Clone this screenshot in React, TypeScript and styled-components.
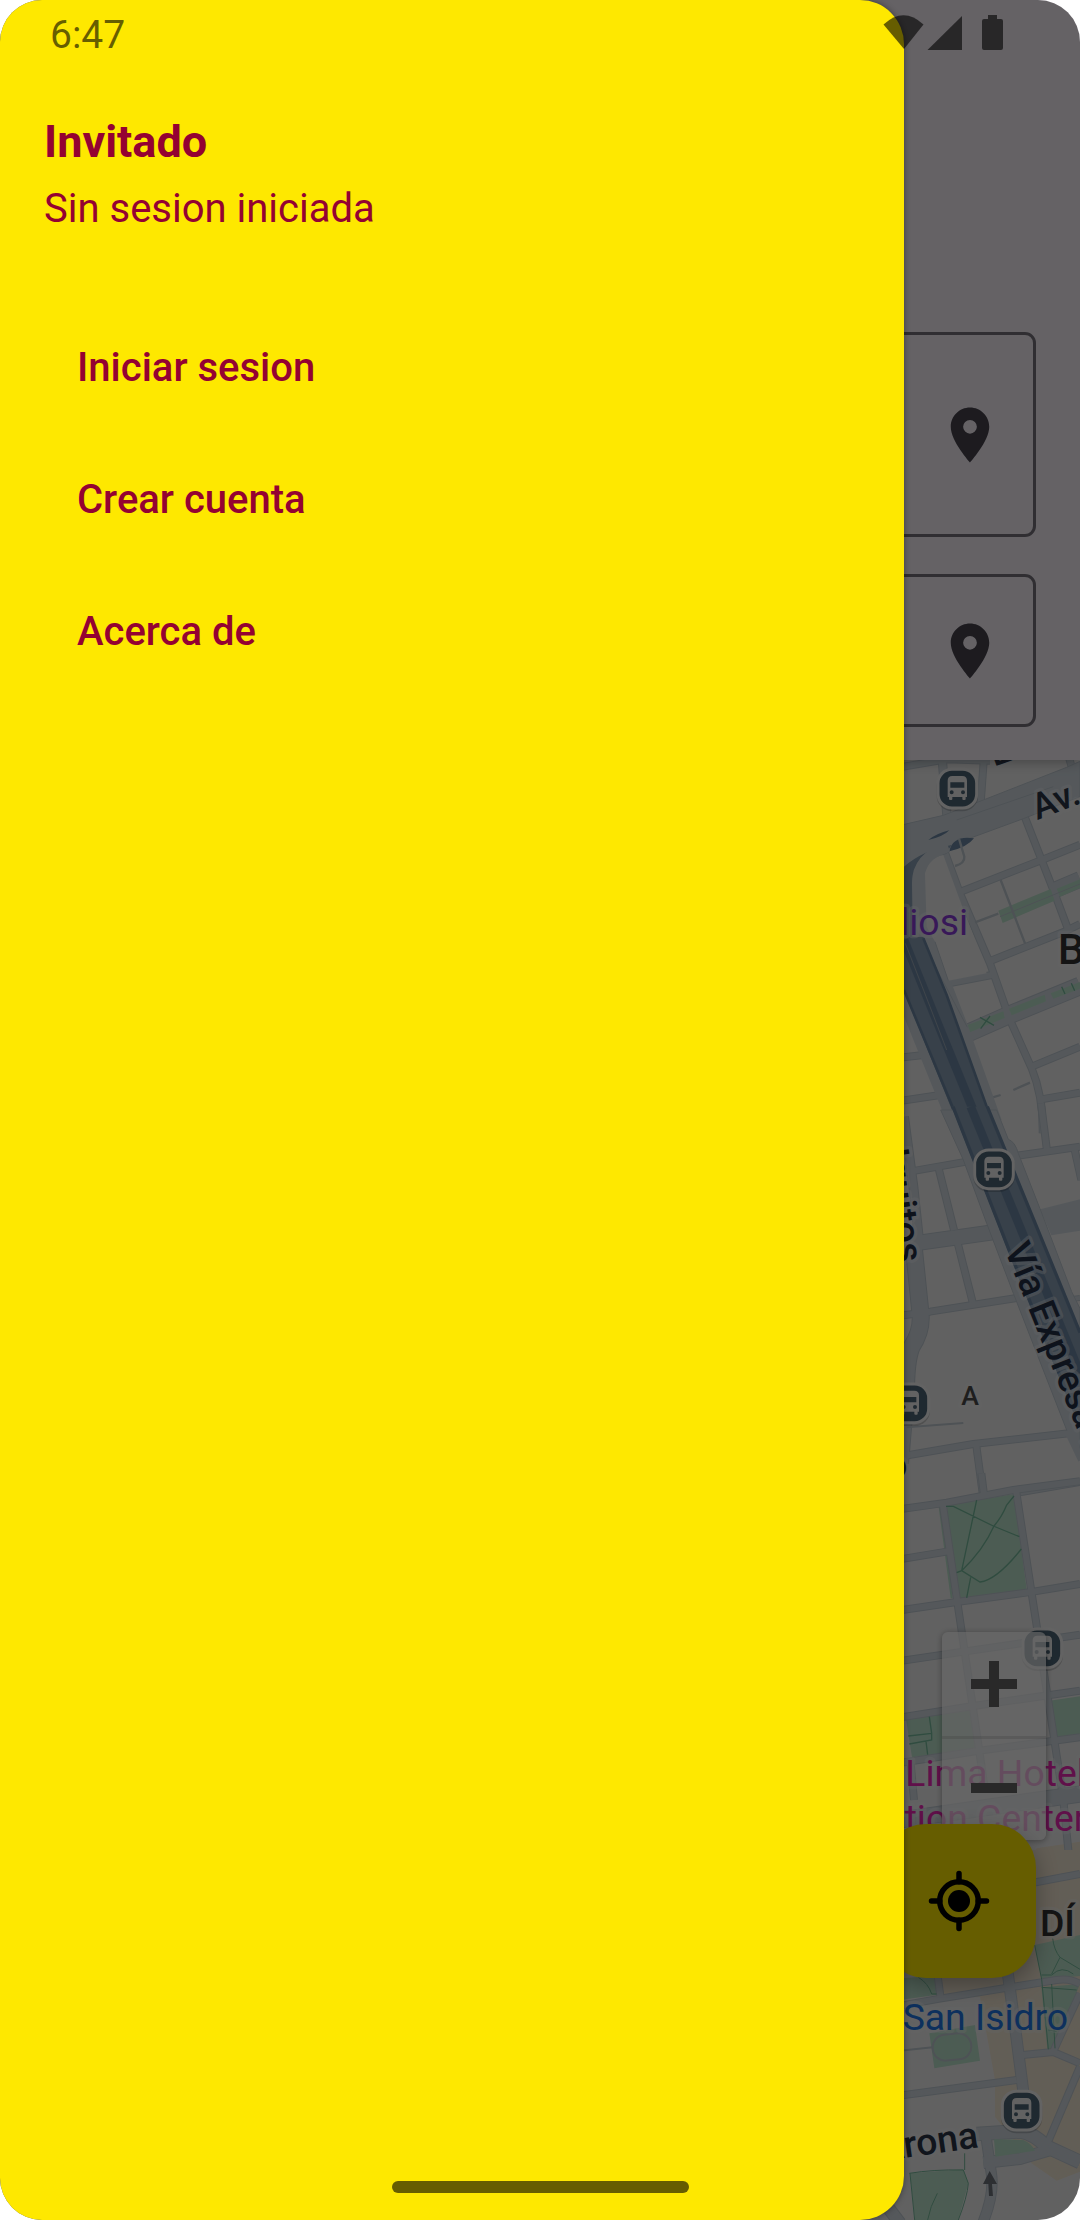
import React from "react";
import styled, { createGlobalStyle } from "styled-components";

const color = {
  brand: "#fee800",
  wine: "#940232",
  surface: "#fcf6fd",
  outline: "#79747e",
  icon: "#49454f",
  system: "rgba(0, 0, 0, 0.6)",
};

const map = {
  land: "#f3f3f3",
  road: "#d4dde4",
  casing: "#c2ccd5",
  highway: "#8ca2b8",
  lane: "#6f8ba8",
  park: "#bfe6cf",
  trail: "#78bea0",
  built: "#f6ead6",
};

const GlobalStyle = createGlobalStyle`
  *, *::before, *::after { box-sizing: border-box; }
  html { background: #fff; }
  body {
    margin: 0;
    font-family: Roboto, "Noto Sans", sans-serif;
  }
  button { font: inherit; border: 0; margin: 0; padding: 0; background: none; cursor: pointer; }
`;

const Screen = styled.div`
  position: relative;
  display: flex;
  min-height: 100vh;
  overflow: hidden;
  border-radius: 42px;
  background: ${color.surface};
`;

const Home = styled.main`
  flex: 1;
  display: flex;
  flex-direction: column;
`;

const SearchPanel = styled.form`
  position: relative;
  z-index: 1;
  display: flex;
  flex-direction: column;
  gap: 37px;
  padding: 332px 44px 33px;
  background: ${color.surface};
  box-shadow: 0 2px 12px rgba(0, 0, 0, 0.3);
`;

const Field = styled.div<{ $tall?: boolean }>`
  display: flex;
  align-items: center;
  height: ${(p) => (p.$tall ? 205 : 153)}px;
  padding: 0 30px;
  border: 3px solid ${color.outline};
  border-radius: 11px;
`;

const FieldInput = styled.input`
  flex: 1;
  min-width: 0;
  height: 100%;
  border: 0;
  outline: 0;
  background: transparent;
  font: 400 44px/66px Roboto, sans-serif;
`;

const PinButton = styled.button`
  display: flex;
  color: ${color.icon};
`;

const MapArea = styled.section`
  position: relative;
  flex: 1;
  min-height: 1200px;
  overflow: hidden;
  background: ${map.land};
`;

const MapDrawing = styled.svg`
  position: absolute;
  inset: 0;
  width: 100%;
  height: 100%;
`;

const ZoomControls = styled.div`
  position: absolute;
  right: 34px;
  bottom: 380px;
  display: flex;
  flex-direction: column;
  width: 104px;
  border-radius: 6px;
  background: rgba(255, 255, 255, 0.7);
  box-shadow: 0 1px 6px rgba(0, 0, 0, 0.35);
`;

const ZoomButton = styled.button`
  display: grid;
  place-items: center;
  height: 104px;
  color: #666;

  & + & {
    box-shadow: inset 0 3px rgba(120, 120, 120, 0.2);
  }
`;

const LocateButton = styled.button`
  position: absolute;
  right: 44px;
  bottom: 242px;
  display: grid;
  place-items: center;
  width: 154px;
  height: 154px;
  border-radius: 44px;
  background: ${color.brand};
  color: #000;
  box-shadow: 0 8px 22px rgba(0, 0, 0, 0.3);
`;

const Scrim = styled.div`
  position: absolute;
  inset: 0;
  z-index: 2;
  background: rgba(0, 0, 0, 0.6);
`;

const Drawer = styled.aside`
  position: absolute;
  inset: 0 auto 0 0;
  z-index: 3;
  display: flex;
  flex-direction: column;
  gap: 65px;
  width: 904px;
  max-width: 84%;
  padding: 109px 44px 44px;
  border-radius: 0 44px 44px 0;
  background: ${color.brand};
  color: ${color.wine};
  box-shadow: 0 0 6px rgba(0, 0, 0, 0.4);
`;

const Account = styled.header`
  display: flex;
  flex-direction: column;
  gap: 6px;
`;

const AccountName = styled.h1`
  margin: 0;
  font-size: 45px;
  font-weight: 700;
  line-height: 66px;
`;

const AccountStatus = styled.p`
  margin: 0;
  font-size: 40px;
  line-height: 55px;
`;

const Menu = styled.nav`
  display: flex;
  flex-direction: column;
`;

const MenuItem = styled.button`
  height: 132px;
  padding: 0 33px;
  color: inherit;
  font-size: 40px;
  font-weight: 500;
  line-height: 55px;
  text-align: left;
`;

const StatusBar = styled.div`
  position: absolute;
  inset: 0 0 auto;
  z-index: 4;
  display: flex;
  align-items: center;
  justify-content: space-between;
  height: 70px;
  padding: 0 76px 0 50px;
  color: ${color.system};
  pointer-events: none;
`;

const Clock = styled.time`
  font-size: 39px;
  line-height: 70px;
`;

const GestureBar = styled.div`
  position: absolute;
  bottom: 27px;
  left: 0;
  right: 0;
  z-index: 4;
  width: 297px;
  height: 12px;
  margin: 0 auto;
  border-radius: 6px;
  background: ${color.system};
`;

const PinIcon = () => (
  <svg width="66" height="66" viewBox="0 0 24 24" fill="currentColor" aria-hidden="true">
    <path d="M12 2C8.13 2 5 5.13 5 9c0 5.25 7 13 7 13s7-7.75 7-13c0-3.87-3.13-7-7-7zm0 9.5a2.5 2.5 0 0 1 0-5 2.5 2.5 0 0 1 0 5z" />
  </svg>
);

const LocateIcon = () => (
  <svg width="66" height="66" viewBox="0 0 24 24" fill="none" stroke="currentColor" strokeWidth="2" aria-hidden="true">
    <circle cx="12" cy="12" r="7" />
    <circle cx="12" cy="12" r="4" fill="currentColor" stroke="none" />
    <path strokeLinecap="round" d="M12 2v3M12 19v3M2 12h3M19 12h3" />
  </svg>
);

const StatusIcons = () => (
  <svg width="122" height="40" viewBox="0 0 122 40" fill="currentColor" aria-hidden="true">
    <path d="M1.500 9.500Q21.500-9 41.500 9.500L22 34Z" />
    <path d="M45.500 35L80 1V35Z" />
    <path d="M106 0h9v4h4a2 2 0 0 1 2 2v27a2 2 0 0 1-2 2h-17a2 2 0 0 1-2-2V6a2 2 0 0 1 2-2h4Z" />
  </svg>
);

type StreetProps = { d: string; w?: number };

const Streets = ({ items }: { items: StreetProps[] }) => (
  <g fill="none" strokeLinejoin="round">
    {items.map((s) => (
      <path key={"c" + s.d} d={s.d} stroke={map.casing} strokeWidth={s.w ?? 24} />
    ))}
    {items.map((s) => (
      <path key={"f" + s.d} d={s.d} stroke={map.road} strokeWidth={(s.w ?? 24) - 6} />
    ))}
  </g>
);

const BusStop = ({ x, y }: { x: number; y: number }) => (
  <g transform={`translate(${x} ${y})`}>
    <rect x="-62" y="-56" width="124" height="124" rx="46" fill="#000" opacity="0.18" />
    <rect x="-58" y="-58" width="116" height="116" rx="42" fill="#4e6678" stroke="#f7f7f7" strokeWidth="9" />
    <path
      fill="#f4f4f4"
      fillRule="evenodd"
      d="M-15-38h30q14 0 14 14V25h-4v6q0 3-3 3h-4q-3 0-3-3v-6h-30v6q0 3-3 3h-4q-3 0-3-3v-6h-4V-24q0-14 14-14ZM-21-19V-3h42v-16ZM-17 5a6 6 0 1 0 0 12a6 6 0 1 0 0-12ZM17 5a6 6 0 1 0 0 12a6 6 0 1 0 0-12Z"
    />
  </g>
);

const Label = styled.text<{ $fill: string; $weight?: number; $size?: number }>`
  fill: ${(p) => p.$fill};
  font-family: Roboto, sans-serif;
  font-size: ${(p) => p.$size ?? 112}px;
  font-weight: ${(p) => p.$weight ?? 400};
  stroke: rgba(247, 250, 252, 0.4);
  stroke-width: 20px;
  stroke-linejoin: round;
  paint-order: stroke;
`;

const northStreets: StreetProps[] = [
  { d: "M0 92L200 58L330 62" },
  { d: "M186 50L202 240", w: 28 },
  { d: "M312 50L302 190" },
  { d: "M566 50L578 90" },
  { d: "M432 225L520 450L565 570" },
  { d: "M192 330L240 460L330 670L390 840L455 985Q490 1070 488 1180" },
  { d: "M240 456L480 362L600 314" },
  { d: "M520 452L600 418", w: 50 },
  { d: "M325 665L560 572L600 552" },
  { d: "M195 732L335 705" },
  { d: "M235 892L380 828L600 738", w: 56 },
  { d: "M450 982L600 920" },
  { d: "M484 1078L600 1058" },
  { d: "M0 960L130 945" },
  { d: "M0 1092L175 1066" },
  { d: "M130 605L175 600" },
];

const midStreets: StreetProps[] = [
  { d: "M483 -20L502 130" },
  { d: "M405 138L600 110" },
  { d: "M584 120L604 210" },
  { d: "M60 190L260 155" },
  { d: "M175 172L222 360" },
  { d: "M72 20L100 230L118 400", w: 30 },
  { d: "M90 402L345 366", w: 48 },
  { d: "M232 395L280 585" },
  { d: "M60 617L150 605L410 564" },
  { d: "M570 568L600 564", w: 18 },
  { d: "M100 400L122 615Q125 665 95 710Q78 750 78 850L60 1060", w: 54 },
  { d: "M0 1050L280 1002L580 968" },
  { d: "M288 1000L308 1150" },
  { d: "M400 1150L600 1116" },
];

const southStreets: StreetProps[] = [
  { d: "M0 96L200 68L400 30L600 4" },
  { d: "M304 -20L312 45" },
  { d: "M188 70L240 420L315 930" },
  { d: "M408 30L455 340L520 760L550 960L575 1210L590 1300" },
  { d: "M0 248L205 214" },
  { d: "M0 400L230 366L460 335L600 312" },
  { d: "M0 552L250 515L600 464" },
  { d: "M0 722L280 678L600 632" },
  { d: "M0 858L300 812L600 772" },
  { d: "M92 850L102 960" },
  { d: "M60 1020L600 942", w: 52 },
];

const lowerStreets: StreetProps[] = [
  { d: "M440 102L600 72" },
  { d: "M172 370L182 445" },
  { d: "M0 478L180 446L390 412L530 390Q570 384 600 402" },
  { d: "M382 360L405 530L432 740", w: 36 },
  { d: "M0 745L410 690" },
  { d: "M420 616L520 606L600 640" },
  { d: "M518 608L600 430" },
  { d: "M498 890L600 650" },
  { d: "M290 852L420 844Q460 850 500 890L600 936", w: 44 },
  { d: "M310 938L420 926L510 900", w: 38 },
  { d: "M318 860L334 970Q344 1030 308 1120", w: 34 },
  { d: "M0 1040L60 1120", w: 40 },
];

/* The four bands of the map stack downwards, each 1110 units tall. */
const CityMap = () => (
  <MapDrawing viewBox="0 760 1080 1460" preserveAspectRatio="xMaxYMin slice" role="img" aria-label="Mapa de Lima">
    <g transform="translate(880 740) scale(0.33333)">
      <g>
        <Streets items={northStreets} />
        <path d="M0 270L190 226L310 180L560 82L600 64V170L430 236L250 302L200 340L0 420Z" fill={map.road} stroke={map.casing} strokeWidth="3" />
        <path d="M230 240L520 140" stroke={map.casing} strokeWidth="3" />
        <path d="M355 512L512 447L524 482L368 549Z M530 446L600 418V444L540 470Z" fill={map.park} />
        <path d="M360 530L600 432" stroke={map.casing} strokeWidth="3" />
        <path d="M255 858L370 814L374 834L262 880Z M387 806L494 764L498 784L395 826Z M512 760L600 726V746L520 776Z" fill={map.park} />
        <path d="M300 832L342 856M330 828L302 866M545 740L555 762M574 730L584 752" stroke={map.trail} strokeWidth="4" fill="none" />
        <path d="M362 420L435 610M285 547L355 521M338 1072L362 1065M400 1050L450 1028" stroke={map.casing} strokeWidth="7" fill="none" />
        <path d="M72 830L0 700V360H165V600L265 860L365 1140H198Z" fill={map.road} />
        <path d="M135 400Q150 350 190 345L232 460L300 640L320 700L205 722L165 605L140 560Z" fill={map.land} />
        <path d="M165 605L205 722M124 600L262 862" fill="none" stroke={map.casing} strokeWidth="3" />
        <path d="M72 380Q130 330 215 315L200 335Q97 350 97 430V590H130L200 760L340 1150H232L72 755L0 640V420Z" fill={map.highway} />
        <path d="M145 300Q170 280 208 271Q190 290 145 300ZM208 334Q218 285 282 295Q262 322 208 334Z" fill={map.lane} />
        <path d="M205 320Q110 350 111 430L118 590" fill="none" stroke={map.road} strokeWidth="30" />
        <path d="M237 296L253 350Q255 370 225 378" fill="none" stroke={map.casing} strokeWidth="7" />
        <path d="M72 600L165 830L296 1150" fill="none" stroke={map.lane} strokeWidth="26" />
        <path d="M76 610L150 800L200 930" fill="none" stroke="#9eacba" strokeWidth="3" />
        <path d="M72 750L238 1150M130 595L200 765L338 1150" fill="none" stroke={map.lane} strokeWidth="8" />
      </g>

      <g transform="translate(0 1110)">
        <path d="M480 298L600 268V362L514 376Z" fill={map.road} />
        <Streets items={midStreets} />
        <path d="M182 0L250 150L320 340L400 550L560 960L600 1045V595L575 545L480 296L415 130Q405 95 385 88L350 0Z" fill={map.road} stroke={map.casing} strokeWidth="3" />
        <path d="M215 -10L385 425L580 905L600 940V668L485 380L325 -10Z" fill={map.highway} />
        <path d="M272 -10L440 400L600 790" fill="none" stroke={map.lane} strokeWidth="26" />
        <path d="M219 -10L389 425L584 905M322 -10L482 380L600 668" fill="none" stroke={map.lane} strokeWidth="10" />
        <path d="M562 962L604 1050" fill="none" stroke={map.road} strokeWidth="20" />
        <path d="M80 952L250 939" fill="none" stroke={map.casing} strokeWidth="6" />
      </g>

      <g transform="translate(0 2220)">
        <path d="M470 1105L600 1085V1180H440Z" fill={map.built} />
        <path d="M198 76L402 42L440 328L240 356ZM176 82L190 80L218 355H212ZM78 718L276 690L292 806L96 832ZM508 662L604 648V762L526 776Z" fill={map.park} />
        <Streets items={southStreets} />
        <path d="M198 79H220L340 138L418 170M402 48L380 75Q366 110 342 138Q310 210 245 272L230 278M290 60L245 272L300 306Q350 300 424 207M272 292L260 354M148 710L155 760V780L88 792M85 768L155 760M138 784L143 824" fill="none" stroke={map.trail} strokeWidth="4" />
      </g>

      <g transform="translate(0 3330)">
        <path d="M430 0H600V965L530 992L455 940L345 800V690L325 580L300 440L180 440L176 370Z" fill={map.built} />
        <path d="M464 285L600 255V378L485 390ZM484 412L600 402L556 510L515 600L502 598ZM60 385L165 378L172 434L60 450ZM148 550L285 525L300 632L163 655ZM90 970L250 958L265 1000L235 1110H105Z" fill={map.park} />
        <Streets items={lowerStreets} />
        <path d="M342 868L430 870Q455 880 465 902L346 920Z" fill={map.park} />
        <rect x="158" y="552" width="116" height="78" rx="38" fill="none" stroke={map.casing} strokeWidth="6" transform="rotate(-6 216 591)" />
        <path d="M60 602L158 592" stroke={map.casing} strokeWidth="6" />
        <path d="M464 285L485 388L505 598M485 375H515Q545 345 580 372M515 372L540 322Q522 300 518 265M540 322L600 358M515 402L525 595M485 412L590 420M505 540L530 545M115 382Q145 400 155 432H170M88 970Q160 958 250 960L265 1000Q262 1040 235 1110M254 910V960M172 1030Q150 1070 143 1110M90 970L104 1110" fill="none" stroke={map.trail} strokeWidth="3" />
        <path d="M329 963L351 1002H336L339 1038H327L325 1002H309Z" fill="#72777e" />
      </g>

      <BusStop x={232} y={146} />
      <BusStop x={342} y={1288} />
      <BusStop x={88} y={1990} />
      <BusStop x={487} y={2725} />
      <BusStop x={425} y={4112} />

      <Label $fill="#30394a" $weight={500} transform="translate(342 80) rotate(-20)">L</Label>
      <Label $fill="#2b3648" $weight={500} $size={108} transform="translate(472 240) rotate(-21)">Av.</Label>
      <Label $fill="#8c3cdc" x="264" y="584" textAnchor="end">liosi</Label>
      <Label $fill="#333333" $weight={500} $size={126} x="534" y="673">B</Label>
      <Label $fill="#243048" $weight={500} transform="translate(54 1570) rotate(82)" textAnchor="end">Jr. Iquitos</Label>
      <Label $fill="#243048" $weight={500} transform="translate(372 1526) rotate(68)">Vía Expresa L</Label>
      <Label $fill="#4c4c4c" $weight={500} $size={80} x="244" y="1995">A</Label>
      <Label $fill="#2b3648" $weight={500} x="82" y="2214" textAnchor="end">o</Label>
      <Label $fill="#f028b8" x="76" y="3138">Lima Hotel</Label>
      <Label $fill="#f028b8" x="74" y="3273">tion Center</Label>
      <Label $fill="#333333" $weight={500} x="480" y="3587">DÍ</Label>
      <Label $fill="#2278e8" x="68" y="3870">San Isidro</Label>
      <Label $fill="#2b3648" $weight={500} transform="translate(298 4222) rotate(-8)" textAnchor="end">Arona</Label>
    </g>
  </MapDrawing>
);

const menuItems = ["Iniciar sesion", "Crear cuenta", "Acerca de"];

export default function App() {
  return (
    <>
      <GlobalStyle />
      <Screen>
        <Home>
          <SearchPanel>
            <Field $tall>
              <FieldInput aria-label="Origen" />
              <PinButton type="button" aria-label="Elegir origen en el mapa">
                <PinIcon />
              </PinButton>
            </Field>
            <Field>
              <FieldInput aria-label="Destino" />
              <PinButton type="button" aria-label="Elegir destino en el mapa">
                <PinIcon />
              </PinButton>
            </Field>
          </SearchPanel>
          <MapArea>
            <CityMap />
            <ZoomControls>
              <ZoomButton type="button" aria-label="Acercar">
                <svg width="46" height="46" viewBox="0 0 46 46" fill="currentColor" aria-hidden="true">
                  <path d="M18 0h10v18h18v10H28v18H18V28H0V18h18Z" />
                </svg>
              </ZoomButton>
              <ZoomButton type="button" aria-label="Alejar">
                <svg width="46" height="46" viewBox="0 0 46 46" fill="currentColor" aria-hidden="true">
                  <path d="M0 18h46v10H0Z" />
                </svg>
              </ZoomButton>
            </ZoomControls>
            <LocateButton type="button" aria-label="Mi ubicacion">
              <LocateIcon />
            </LocateButton>
          </MapArea>
        </Home>

        <Scrim />

        <Drawer>
          <Account>
            <AccountName>Invitado</AccountName>
            <AccountStatus>Sin sesion iniciada</AccountStatus>
          </Account>
          <Menu>
            {menuItems.map((item) => (
              <MenuItem key={item} type="button">
                {item}
              </MenuItem>
            ))}
          </Menu>
        </Drawer>

        <StatusBar>
          <Clock>6:47</Clock>
          <StatusIcons />
        </StatusBar>
        <GestureBar />
      </Screen>
    </>
  );
}
